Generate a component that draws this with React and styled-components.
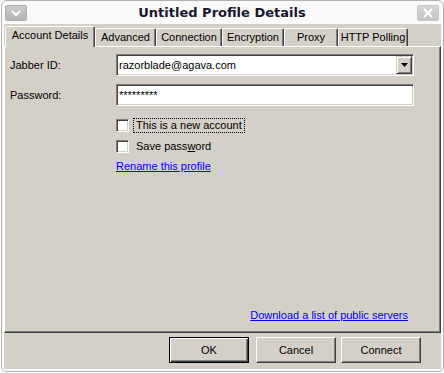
import React from "react";
import styled, { createGlobalStyle } from "styled-components";

const GlobalStyle = createGlobalStyle`
  html, body {
    margin: 0;
    padding: 0;
    background: #ffffff;
  }
  body {
    font-family: "Liberation Sans", Arial, sans-serif;
    font-size: 11px;
    color: #000;
  }
  * { box-sizing: border-box; }
`;

const Frame = styled.div`
  margin-left: 1px;
  width: 443px;
  height: 372px;
  border: 1px solid #b2b2b2;
  border-radius: 6px 6px 5px 5px;
  background: #fafafa;
  padding: 0 2px 2px 2px;
  display: flex;
  flex-direction: column;
`;

const TitleBar = styled.div`
  height: 23px;
  display: grid;
  grid-template-columns: auto 1fr auto;
  align-items: center;
  padding: 0 2px 0 1px;
`;

const TitleText = styled.div`
  text-align: center;
  font-family: "DejaVu Sans", sans-serif;
  font-weight: bold;
  font-size: 13px;
  color: #16162e;
  line-height: 23px;
`;

const TitleButton = styled.div`
  width: 22px;
  height: 16px;
  border-radius: 2px;
  background: linear-gradient(${(p) => (p.$pale ? "#d6d6d6, #c4c4c4" : "#cbcbcb, #b4b4b4")});
  border: 1px solid ${(p) => (p.$pale ? "#c8c8c8" : "#b0b0b0")};
  display: flex;
  align-items: center;
  justify-content: center;
`;

const Client = styled.div`
  flex: 1;
  background: #d4d0c8;
  display: flex;
  flex-direction: column;
`;

const TabRow = styled.div`
  height: 22px;
  display: flex;
  align-items: flex-end;
  padding-left: 1px;
`;

const Tab = styled.div`
  width: ${(p) => p.$w}px;
  height: ${(p) => (p.$active ? 21 : 18)}px;
  margin-bottom: ${(p) => (p.$active ? -1 : 0)}px;
  position: relative;
  z-index: ${(p) => (p.$active ? 2 : 0)};
  background: #d4d0c8;
  border-top: 1px solid #ffffff;
  border-left: 1px solid #ffffff;
  border-right: 1px solid #404040;
  box-shadow: inset -1px 0 #808080;
  border-radius: 2px 2px 0 0;
  display: flex;
  align-items: ${(p) => (p.$active ? "flex-start" : "center")};
  padding-top: ${(p) => (p.$active ? 2 : 0)}px;
  justify-content: center;
  font-size: 11px;
  line-height: 13px;
  white-space: nowrap;
`;

const Panel = styled.div`
  height: 287px;
  border-top: 1px solid #ffffff;
  border-left: 1px solid #ffffff;
  border-right: 1px solid #404040;
  border-bottom: 1px solid #404040;
  box-shadow: inset -1px -1px #808080;
  padding: 7px 32px 10px 5px;
  display: flex;
  flex-direction: column;
`;

const FieldGrid = styled.div`
  display: grid;
  grid-template-columns: 106px 298px;
  row-gap: 8px;
  align-items: center;
`;

const Label = styled.div`
  font-size: 11px;
`;

const Sunken = styled.div`
  height: 22px;
  background: #ffffff;
  border: 1px solid;
  border-color: #808080 #ffffff #ffffff #808080;
  box-shadow: inset 1px 1px #404040, inset -1px -1px #d4d0c8;
  display: flex;
  align-items: center;
  padding: 1px 1px 1px 2px;
  font-size: 11px;
`;

const FieldText = styled.span`
  flex: 1;
  padding-left: ${(p) => p.$pad}px;
  white-space: nowrap;
`;

const DropButton = styled.div`
  width: 16px;
  height: 18px;
  background: #d4d0c8;
  border: 1px solid;
  border-color: #d4d0c8 #404040 #404040 #d4d0c8;
  box-shadow: inset 1px 1px #ffffff, inset -1px -1px #808080;
  display: flex;
  align-items: center;
  justify-content: center;
`;

const Checks = styled.div`
  margin-top: 12px;
  margin-left: 106px;
  display: flex;
  flex-direction: column;
  gap: 6px;
`;

const CheckRow = styled.div`
  display: flex;
  align-items: center;
  height: 15px;
  gap: 4px;
`;

const CheckBox = styled.div`
  width: 13px;
  height: 13px;
  background: #ffffff;
  border: 1px solid;
  border-color: #808080 #ffffff #ffffff #808080;
  box-shadow: inset 1px 1px #404040, inset -1px -1px #d4d0c8;
`;

const CheckLabel = styled.span`
  border: 1px ${(p) => (p.$focus ? "dotted #000" : "solid transparent")};
  padding: 0 2px;
  line-height: 13px;
  font-size: 11px;
`;

const Mnemonic = styled.span`
  text-decoration: underline;
`;

const Link = styled.a`
  color: #0000ff;
  text-decoration: underline;
  font-size: 11px;
  line-height: 13px;
  cursor: pointer;
`;

const RenameLink = styled(Link)`
  margin-top: 6px;
  margin-left: 106px;
  align-self: flex-start;
`;

const ServersLink = styled(Link)`
  margin-top: auto;
  align-self: flex-end;
`;

const Footer = styled.div`
  flex: 1;
  display: flex;
  justify-content: flex-end;
  align-items: flex-start;
  padding: 4px 20px 0 0;
  gap: 5px;
`;

const Button = styled.div`
  width: 80px;
  height: 26px;
  margin-right: ${(p) => (p.$default ? 2 : 0)}px;
  background: #d4d0c8;
  border: 1px solid;
  border-color: ${(p) => (p.$default ? "#000" : "#ffffff #404040 #404040 #ffffff")};
  box-shadow: ${(p) =>
    p.$default
      ? "inset 1px 1px #ffffff, inset -1px -1px #404040, inset -2px -2px #808080"
      : "inset -1px -1px #808080"};
  display: flex;
  align-items: center;
  justify-content: center;
  font-size: 11px;
`;

const tabs = [
  { label: "Account Details", w: 90, active: true },
  { label: "Advanced", w: 61 },
  { label: "Connection", w: 66 },
  { label: "Encryption", w: 62 },
  { label: "Proxy", w: 54 },
  { label: "HTTP Polling", w: 70 },
];

export default function App() {
  return (
    <>
      <GlobalStyle />
      <Frame>
        <TitleBar>
          <TitleButton>
            <svg width="12" height="8" viewBox="0 0 12 8">
              <path d="M2 2 L6 6 L10 2" fill="none" stroke="#fff" strokeWidth="2" />
            </svg>
          </TitleButton>
          <TitleText>Untitled Profile Details</TitleText>
          <TitleButton $pale>
            <svg width="12" height="12" viewBox="0 0 12 12">
              <path d="M2 2 L10 10 M10 2 L2 10" fill="none" stroke="#fff" strokeWidth="2.2" />
            </svg>
          </TitleButton>
        </TitleBar>
        <Client>
          <TabRow>
            {tabs.map((t) => (
              <Tab key={t.label} $w={t.w} $active={t.active}>
                {t.label}
              </Tab>
            ))}
          </TabRow>
          <Panel>
            <FieldGrid>
              <Label>Jabber ID:</Label>
              <Sunken>
                <FieldText $pad={0}>razorblade@agava.com</FieldText>
                <DropButton>
                  <svg width="7" height="4" viewBox="0 0 7 4">
                    <path d="M0 0 H7 L3.5 4 Z" fill="#000" />
                  </svg>
                </DropButton>
              </Sunken>
              <Label>Password:</Label>
              <Sunken>
                <FieldText $pad={0}>*********</FieldText>
              </Sunken>
            </FieldGrid>
            <Checks>
              <CheckRow>
                <CheckBox />
                <CheckLabel $focus>This is a new account</CheckLabel>
              </CheckRow>
              <CheckRow>
                <CheckBox />
                <CheckLabel>
                  Save pass<Mnemonic>w</Mnemonic>ord
                </CheckLabel>
              </CheckRow>
            </Checks>
            <RenameLink>Rename this profile</RenameLink>
            <ServersLink>Download a list of public servers</ServersLink>
          </Panel>
          <Footer>
            <Button $default>OK</Button>
            <Button>Cancel</Button>
            <Button>Connect</Button>
          </Footer>
        </Client>
      </Frame>
    </>
  );
}
